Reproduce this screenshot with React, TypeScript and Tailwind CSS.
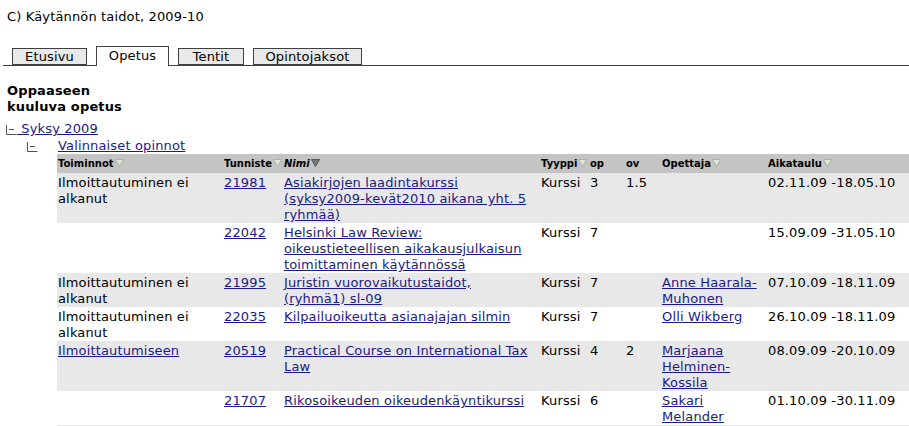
import React from 'react';

type Row = {
  action?: string[];
  actionLink?: boolean;
  code: string;
  name: string[];
  type: string;
  op: string;
  ov?: string;
  teacher?: string[];
  schedule: string;
};

// line breaks kept as in the original listing
const rows: Row[] = [
  { action: ['Ilmoittautuminen ei', 'alkanut'], code: '21981', name: ['Asiakirjojen laadintakurssi', '(syksy2009-kevät2010 aikana yht. 5', 'ryhmää)'], type: 'Kurssi', op: '3', ov: '1.5', schedule: '02.11.09 -18.05.10' },
  { code: '22042', name: ['Helsinki Law Review:', 'oikeustieteellisen aikakausjulkaisun', 'toimittaminen käytännössä'], type: 'Kurssi', op: '7', schedule: '15.09.09 -31.05.10' },
  { action: ['Ilmoittautuminen ei', 'alkanut'], code: '21995', name: ['Juristin vuorovaikutustaidot,', '(ryhmä1) sl-09'], type: 'Kurssi', op: '7', teacher: ['Anne Haarala-', 'Muhonen'], schedule: '07.10.09 -18.11.09' },
  { action: ['Ilmoittautuminen ei', 'alkanut'], code: '22035', name: ['Kilpailuoikeutta asianajajan silmin'], type: 'Kurssi', op: '7', teacher: ['Olli Wikberg'], schedule: '26.10.09 -18.11.09' },
  { action: ['Ilmoittautumiseen'], actionLink: true, code: '20519', name: ['Practical Course on International Tax', 'Law'], type: 'Kurssi', op: '4', ov: '2', teacher: ['Marjaana', 'Helminen-', 'Kossila'], schedule: '08.09.09 -20.10.09' },
  { code: '21707', name: ['Rikosoikeuden oikeudenkäyntikurssi'], type: 'Kurssi', op: '6', teacher: ['Sakari', 'Melander'], schedule: '01.10.09 -30.11.09' },
];

const linkCls = 'text-[#1c1a8a] underline';

const Lines = ({ lines }: { lines: string[] }) => (
  <>
    {lines.map((l, i) => (
      <React.Fragment key={i}>
        {i > 0 && <br />}
        {l}
      </React.Fragment>
    ))}
  </>
);

const SortArrow = ({ active }: { active?: boolean }) => (
  <svg width="9" height="8" viewBox="0 0 9 8" className="inline-block ml-px align-[0px]">
    <path d="M0.5 0.5 H8.5 L4.5 7.5 Z" fill={active ? '#7a7a7a' : '#dfe8d8'} stroke={active ? '#555' : '#a9b3a6'} strokeWidth="1" />
  </svg>
);

const TreeMinus = () => (
  <svg width="11" height="11" viewBox="0 0 11 11" className="inline-block">
    <path d="M0.5 1 V10.5 H10.5 M3 5.5 H8" stroke="#555" strokeWidth="1" fill="none" />
  </svg>
);

const Tab = ({ label, active, w }: { label: string; active?: boolean; w: string }) => (
  <div
    className={
      active
        ? `${w} h-[20px] -mb-px border border-b-0 border-[#404040] bg-white text-center leading-[17px]`
        : `${w} h-[17px] border border-[#404040] bg-[#e9e9e9] text-center leading-[15px]`
    }
  >
    {label}
  </div>
);

const Th = ({ children }: { children: React.ReactNode }) => (
  <th className="text-left font-bold text-[10px] tracking-normal leading-[16px] px-px pt-[2px] pb-px align-middle whitespace-nowrap">{children}</th>
);

const tdCls = 'align-top px-px pt-[2px] pb-0';

export default function App() {
  return (
    <div className="w-[909px] h-[426px] overflow-hidden bg-white text-black text-[13px] leading-[16px] tracking-[0.15px]" style={{ fontFamily: '"DejaVu Sans", Verdana, sans-serif' }}>
      <div className="pl-[7px] pt-[9px]">C) Käytännön taidot, 2009-10</div>

      <div className="mt-[21px] ml-[3px] flex items-end gap-[9px] pl-[9px] border-b border-[#404040]">
        <Tab label="Etusivu" w="w-[75px]" />
        <Tab label="Opetus" active w="w-[73px]" />
        <Tab label="Tentit" w="w-[66px]" />
        <Tab label="Opintojaksot" w="w-[109px]" />
      </div>

      <div className="pl-[7px] pt-[17px] font-bold">
        Oppaaseen
        <br />
        kuuluva opetus
      </div>

      <div className="pl-[6px] pt-[6px] flex items-center">
        <TreeMinus />
        <a className={linkCls}>&nbsp;Syksy 2009</a>
      </div>
      <div className="pl-[27px] pt-px flex items-center">
        <TreeMinus />
        <a className={`${linkCls} ml-[20px]`}>Valinnaiset opinnot</a>
      </div>

      <table className="ml-[57px] w-[852px] table-fixed border-collapse">
        <colgroup>
          <col className="w-[166px]" />
          <col className="w-[60px]" />
          <col className="w-[257px]" />
          <col className="w-[49px]" />
          <col className="w-[36px]" />
          <col className="w-[36px]" />
          <col className="w-[106px]" />
          <col className="w-[142px]" />
        </colgroup>
        <thead>
          <tr className="bg-[#c4c4c4] h-[19px]">
            <Th>Toiminnot<SortArrow /></Th>
            <Th>Tunniste<SortArrow /></Th>
            <Th><i>Nimi</i><SortArrow active /></Th>
            <Th>Tyyppi<SortArrow /></Th>
            <Th>op</Th>
            <Th>ov</Th>
            <Th>Opettaja<SortArrow /></Th>
            <Th>Aikataulu<SortArrow /></Th>
          </tr>
        </thead>
        <tbody>
          {rows.map((r, i) => (
            <tr key={r.code} className={i % 2 === 0 ? 'bg-[#e8e8e8]' : 'bg-white'}>
              <td className={`${tdCls} whitespace-nowrap`}>
                {r.action && (r.actionLink ? <a className={linkCls}><Lines lines={r.action} /></a> : <Lines lines={r.action} />)}
              </td>
              <td className={tdCls}><a className={linkCls}>{r.code}</a></td>
              <td className={`${tdCls} whitespace-nowrap`}><a className={linkCls}><Lines lines={r.name} /></a></td>
              <td className={tdCls}>{r.type}</td>
              <td className={tdCls}>{r.op}</td>
              <td className={tdCls}>{r.ov}</td>
              <td className={`${tdCls} whitespace-nowrap`}>{r.teacher && <a className={linkCls}><Lines lines={r.teacher} /></a>}</td>
              <td className={`${tdCls} whitespace-nowrap`}>{r.schedule}</td>
            </tr>
          ))}
          <tr className="bg-[#e8e8e8] h-[34px]">
            <td colSpan={8}></td>
          </tr>
        </tbody>
      </table>
    </div>
  );
}
